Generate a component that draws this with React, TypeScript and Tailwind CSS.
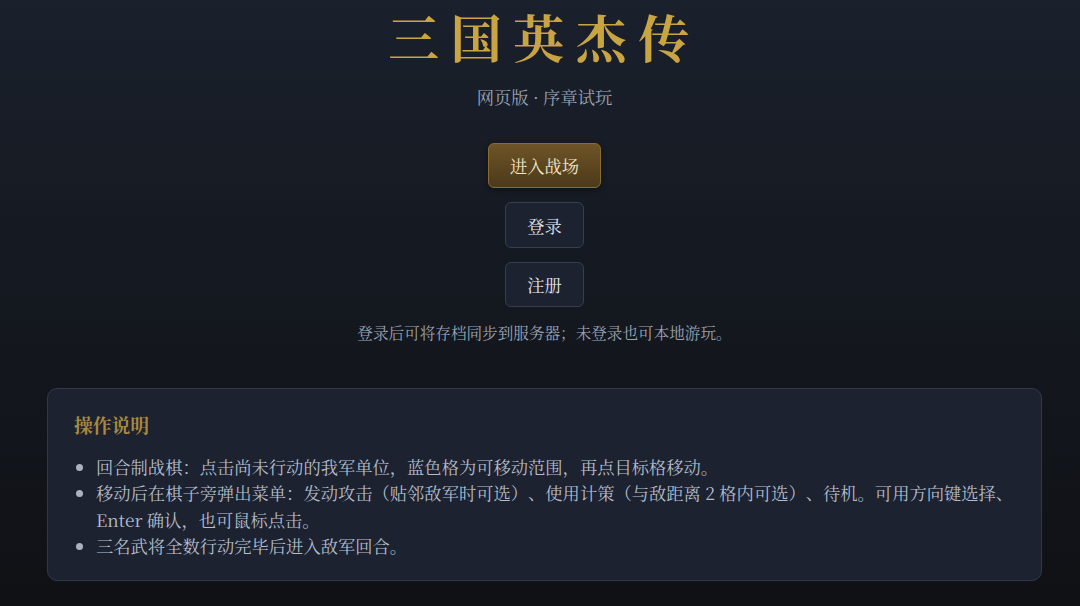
import React from "react";

const serif = '"Noto Serif CJK SC", "Liberation Serif", "Noto Sans CJK SC", serif';

export default function App() {
  return (
    <div
      className="min-h-screen w-full bg-gradient-to-b from-[#1a202c] via-[#14181f] to-[#0f1115] pl-[47px] pr-[38px] [text-spacing-trim:space-all]"
      style={{ fontFamily: serif }}
    >
      <div className="flex flex-col items-center">
        <h1 className="mt-[11px] text-[51px] leading-none tracking-[11.5px] text-[#c9a443] font-bold">
          三国英杰传
        </h1>
        <p className="mt-[22px] text-[17.3px] leading-[25px] text-[#9aa5b8]">网页版 · 序章试玩</p>

        <div className="mt-[34px] flex flex-col items-center gap-[14px]">
          <button className="h-[45px] px-[21px] rounded-[6px] border border-[#8a6c30] bg-gradient-to-b from-[#6e5427] to-[#4d3a19] text-[17.3px] leading-[25px] text-[#f3e7c9] shadow-[0_2px_6px_rgba(0,0,0,0.35)]">
            进入战场
          </button>
          <button className="h-[46px] px-[21px] rounded-[6px] border border-[#363e50] bg-[#1c2230] text-[17.3px] leading-[25px] text-[#e4e7ee]">
            登录
          </button>
          <button className="h-[45px] px-[21px] rounded-[6px] border border-[#363e50] bg-[#1c2230] text-[17.3px] leading-[25px] text-[#e4e7ee]">
            注册
          </button>
          <p className="text-[15.6px] leading-[23px] text-[#9ba4b4]">
            登录后可将存档同步到服务器；未登录也可本地游玩。
          </p>
        </div>

        <div className="mt-[44px] w-full rounded-[10px] border border-[#303849] bg-[#1c2230] pt-[22px] pb-[20px] pl-[26px] pr-[26px]">
          <h2 className="text-[18.8px] leading-[28px] font-bold text-[#a88a3c]">操作说明</h2>
          <ul className="mt-[15px] list-disc pl-[22px] text-[17.3px] leading-[26.4px] text-[#b5bdcb] marker:text-[#aab2c0]">
            <li>回合制战棋：点击尚未行动的我军单位，蓝色格为可移动范围，再点目标格移动。</li>
            <li>
              移动后在棋子旁弹出菜单：发动攻击（贴邻敌军时可选）、使用计策（与敌距离 2 格内可选）、待机。可用方向键选择、Enter 确认，也可鼠标点击。
            </li>
            <li>三名武将全数行动完毕后进入敌军回合。</li>
          </ul>
        </div>
      </div>
    </div>
  );
}
